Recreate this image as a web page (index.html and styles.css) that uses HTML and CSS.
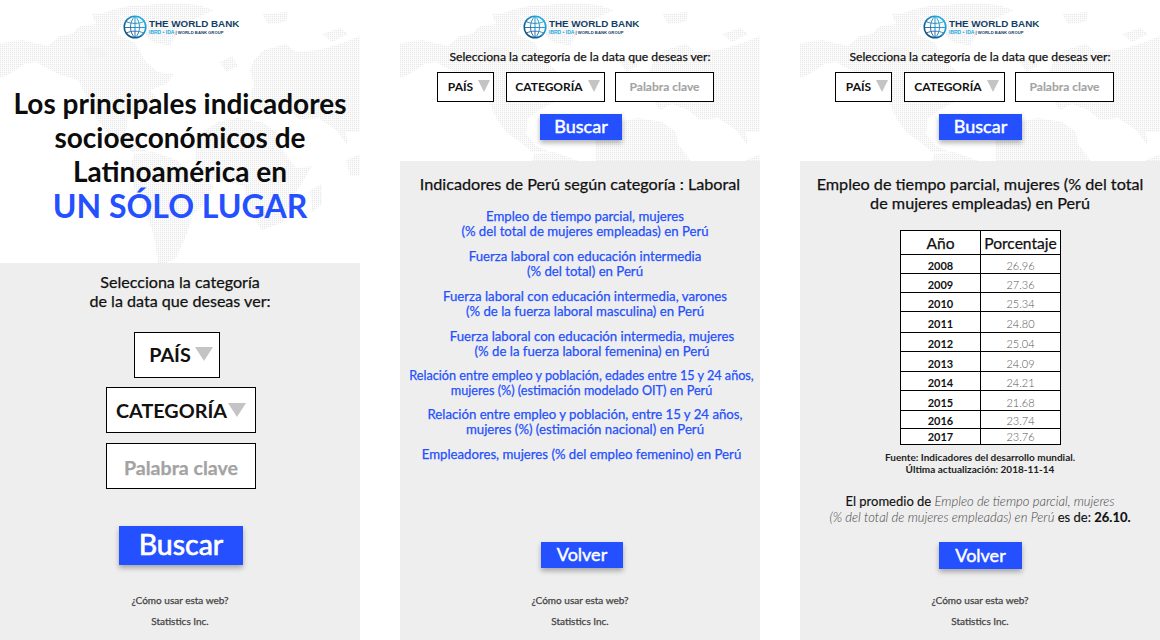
FILE: index.html
```html
<!DOCTYPE html>
<html>
<head>
    <meta charset="UTF-8">
    <meta name="viewport" content="width=device-width, initial-scale=1.0">
    <title>Indicadores socioeconómicos de Latinoamérica</title>
    <link rel="stylesheet" href="styles.css">
</head>
<body>
    <!-- shared drawings: dotted world map and the globe of the logo -->
    <svg class="defs" width="0" height="0">
        <defs>
            <pattern id="dots" width="2" height="2" patternUnits="userSpaceOnUse">
                <rect width="1.3" height="1.3" fill="#e9e9e9"/>
            </pattern>
            <linearGradient id="globe" x1="0" y1="1" x2="1" y2="0">
                <stop offset="0" stop-color="#123f6b"/>
                <stop offset="0.45" stop-color="#1a78b4"/>
                <stop offset="1" stop-color="#1fc0f0"/>
            </linearGradient>
            <symbol id="worldmap" viewBox="0 0 360 263">
                <g fill="url(#dots)">
                    <path d="M0 43L22 40L48 46L60 36L72 34L80 26L96 24L92 14L112 12L126 20L116 34L134 42L146 62L158 72L174 74L166 84L150 90L158 100L146 106L128 118L126 134L136 146L150 152L132 152L120 142L106 132L96 118L88 100L78 80L58 74L36 62L24 64L10 74L0 78Z"/>
                    <path d="M104 12L128 6L176 3L198 5L214 10L196 18L178 30L170 46L152 42L138 26L122 16Z"/>
                    <path d="M82 48L98 46L108 56L92 60Z"/>
                    <path d="M262 14L288 12L286 22L268 24Z"/>
                    <path d="M134 154L154 152L176 160L196 176L214 186L204 204L192 216L186 236L176 258L166 263L158 263L154 236L146 212L134 188L130 168Z"/>
                    <path d="M196 136L218 122L238 118L262 122L276 132L278 144L296 168L312 166L300 186L290 202L284 222L262 230L252 216L244 186L226 182L208 178L196 162Z"/>
                    <path d="M310 190L322 184L322 204L312 212Z"/>
                    <path d="M254 60L264 50L286 44L296 52L318 50L340 44L360 36L360 132L346 132L348 146L336 130L318 118L300 120L288 110L272 104L260 110L250 96L254 84L250 70Z"/>
                    <path d="M322 34L340 28L348 34L332 42Z"/>
                    <path d="M220 62L232 56L238 66L226 72Z"/>
                    <path d="M346 160L360 154L360 176L350 176Z"/>
                </g>
            </symbol>
            <symbol id="globeicon" viewBox="0 0 24 24">
                <g fill="none" stroke="url(#globe)">
                    <circle cx="12" cy="12" r="10.8" stroke-width="1.5"/>
                    <path stroke-width="0.9" d="M12 1.5V22.5M3 6.5C8 9 16 9 21 6.5M1.5 12.5H22.5M3.5 18C8 15.6 16 15.6 20.5 18M12 1.5C6 6 6 18 12 22.5M12 1.5C18 6 18 18 12 22.5"/>
                </g>
            </symbol>
        </defs>
    </svg>

    <main class="screens">
        <!-- pantalla de inicio -->
        <section class="screen">
            <svg class="map"><use href="#worldmap"/></svg>
            <header class="top top-home">
                <div class="logo">
                    <svg class="logo-globe"><use href="#globeicon"/></svg>
                    <div>
                        <div class="logo-name">THE WORLD BANK</div>
                        <div class="logo-sub"><span class="logo-ibrd">IBRD • IDA</span> | WORLD BANK GROUP</div>
                    </div>
                </div>
                <h1 class="hero">Los principales indicadores socioeconómicos de Latinoamérica en <span class="hero-blue">UN SÓLO LUGAR</span></h1>
            </header>
            <div class="panel panel-home">
                <p class="home-lead">Selecciona la categoría<br>de la data que deseas ver:</p>
                <div class="box box-lg box-pais">PAÍS<span class="arrow arrow-lg arrow-pais"></span></div>
                <div class="box box-lg box-cat">CATEGORÍA<span class="arrow arrow-lg"></span></div>
                <div class="box box-lg box-key">Palabra clave</div>
                <button class="btn btn-lg">Buscar</button>
                <footer class="foot">
                    <p>¿Cómo usar esta web?</p>
                    <p>Statistics Inc.</p>
                </footer>
            </div>
        </section>

        <!-- lista de indicadores -->
        <section class="screen">
            <svg class="map"><use href="#worldmap"/></svg>
            <header class="top">
                <div class="logo">
                    <svg class="logo-globe"><use href="#globeicon"/></svg>
                    <div>
                        <div class="logo-name">THE WORLD BANK</div>
                        <div class="logo-sub"><span class="logo-ibrd">IBRD • IDA</span> | WORLD BANK GROUP</div>
                    </div>
                </div>
                <p class="lead">Selecciona la categoría de la data que deseas ver:</p>
                <div class="filters">
                    <div class="box box-sm box-pais-sm">PAÍS<span class="arrow"></span></div>
                    <div class="box box-sm box-cat-sm">CATEGORÍA<span class="arrow"></span></div>
                    <div class="box box-sm box-key box-key-sm">Palabra clave</div>
                </div>
                <button class="btn btn-search">Buscar</button>
            </header>
            <div class="panel">
                <h2 class="title">Indicadores de Perú según categoría : Laboral</h2>
                <ul class="links">
                    <li>Empleo de tiempo parcial, mujeres<br>(% del total de mujeres empleadas) en Perú</li>
                    <li>Fuerza laboral con educación intermedia<br>(% del total) en Perú</li>
                    <li>Fuerza laboral con educación intermedia, varones<br>(% de la fuerza laboral masculina) en Perú</li>
                    <li class="link-right">Fuerza laboral con educación intermedia, mujeres<br>(% de la fuerza laboral femenina) en Perú</li>
                    <li class="link-left link-tight link-long">Relación entre empleo y población, edades entre 15 y 24 años,<br>mujeres (%) (estimación modelado OIT) en Perú</li>
                    <li class="link-tight">Relación entre empleo y población, entre 15 y 24 años,<br>mujeres (%) (estimación nacional) en Perú</li>
                    <li class="link-left">Empleadores, mujeres (% del empleo femenino) en Perú</li>
                </ul>
                <button class="btn btn-back btn-back-list">Volver</button>
                <footer class="foot foot-list">
                    <p>¿Cómo usar esta web?</p>
                    <p>Statistics Inc.</p>
                </footer>
            </div>
        </section>

        <!-- detalle del indicador -->
        <section class="screen">
            <svg class="map"><use href="#worldmap"/></svg>
            <header class="top">
                <div class="logo">
                    <svg class="logo-globe"><use href="#globeicon"/></svg>
                    <div>
                        <div class="logo-name">THE WORLD BANK</div>
                        <div class="logo-sub"><span class="logo-ibrd">IBRD • IDA</span> | WORLD BANK GROUP</div>
                    </div>
                </div>
                <p class="lead">Selecciona la categoría de la data que deseas ver:</p>
                <div class="filters filters-wide">
                    <div class="box box-sm box-pais-sm">PAÍS<span class="arrow"></span></div>
                    <div class="box box-sm box-cat-wide">CATEGORÍA<span class="arrow"></span></div>
                    <div class="box box-sm box-key box-key-sm">Palabra clave</div>
                </div>
                <button class="btn btn-search btn-search-wide">Buscar</button>
            </header>
            <div class="panel">
                <h2 class="title">Empleo de tiempo parcial, mujeres (% del total<br>de mujeres empleadas) en Perú</h2>
                <table class="data">
                    <tr class="head"><th>Año</th><th>Porcentaje</th></tr>
                    <tr><td>2008</td><td>26.96</td></tr>
                    <tr><td>2009</td><td>27.36</td></tr>
                    <tr><td>2010</td><td>25.34</td></tr>
                    <tr class="r21"><td>2011</td><td>24.80</td></tr>
                    <tr><td>2012</td><td>25.04</td></tr>
                    <tr class="r20"><td>2013</td><td>24.09</td></tr>
                    <tr><td>2014</td><td>24.21</td></tr>
                    <tr class="r20"><td>2015</td><td>21.68</td></tr>
                    <tr class="r18"><td>2016</td><td>23.74</td></tr>
                    <tr class="r16"><td>2017</td><td>23.76</td></tr>
                </table>
                <p class="source">Fuente: Indicadores del desarrollo mundial.<br>Última actualización: 2018-11-14</p>
                <p class="avg">El promedio de <em>Empleo de tiempo parcial, mujeres<br>(% del total de mujeres empleadas) en Perú</em> es de: <strong>26.10.</strong></p>
                <button class="btn btn-back btn-back-detail">Volver</button>
                <footer class="foot">
                    <p>¿Cómo usar esta web?</p>
                    <p>Statistics Inc.</p>
                </footer>
            </div>
        </section>
    </main>
</body>
</html>
```
FILE: styles.css
```css
/* base */
*{margin:0;padding:0;box-sizing:border-box;}
html,body{width:100%;height:100%;background:#fff;}
body{font-family:"Lato","Noto Sans",sans-serif;color:#111;overflow:hidden;}
.defs{position:absolute;}

/* Lato has no medium cut here, thicken the regular a little */
.lead,.home-lead,.title,.links,.foot,.box-key,.data th{font-weight:400;-webkit-text-stroke:0.25px currentColor;}
.avg{font-weight:400;-webkit-text-stroke:0.15px currentColor;}
.avg em{-webkit-text-stroke:0;}

.screens{display:flex;gap:40px;height:640px;}
.screen{width:360px;height:640px;display:flex;flex-direction:column;position:relative;}
.map{position:absolute;top:0;left:0;width:360px;height:263px;}

/* top part, sits over the map */
.top{height:161px;padding-top:15px;position:relative;display:flex;flex-direction:column;}
.top-home{height:263px;}

.logo{display:flex;align-items:center;gap:2px;height:23px;padding-left:123px;}
.logo-globe{width:24px;height:24px;}
.logo-name{font-family:"Liberation Sans",sans-serif;font-weight:700;font-size:9.8px;line-height:11px;color:#133f66;}
.logo-sub{font-family:"Liberation Sans",sans-serif;font-weight:700;font-size:4.2px;line-height:7px;color:#133f66;white-space:nowrap;}
.logo-ibrd{color:#1fa9e0;font-size:5px;}

.hero{margin-top:48px;font-size:28px;line-height:34px;font-weight:700;text-align:center;padding:0 12px;color:#0c0c0c;}
.hero-blue{display:block;padding-top:1px;color:#2450ff;font-size:32px;}

.lead{margin-top:11px;text-align:center;font-size:12.2px;line-height:16px;}
.filters{display:flex;margin-top:7px;padding-left:37px;}
.filters-wide{padding-left:35px;}

/* select and input boxes */
.box{background:#fff;border:1px solid #000;display:flex;align-items:center;justify-content:center;font-weight:700;}
.box-key{color:#a3a3a3;}
.box-sm{height:30px;font-size:12px;padding:0 0 2px 7px;}
.box-pais-sm{width:57px;margin-right:12px;}
.box-cat-sm{width:99px;margin-right:10px;padding-left:4px;}
.box-cat-wide{width:101px;margin-right:10px;padding-left:4px;}
.box-key-sm{width:99px;padding:0 0 2px;-webkit-text-stroke:0.1px currentColor;}
.arrow{width:0;height:0;margin-left:5px;border-left:6px solid transparent;border-right:6px solid transparent;border-top:12px solid #c4c4c4;}
.box-lg{height:46px;font-size:19.8px;}
.box-pais{width:86px;margin:22px 6px 0 0;padding:0 0 2px 8px;}
.box-cat{width:150px;margin:9px 0 0 2px;}
.box-lg.box-key{width:150px;margin:10px 0 0 2px;padding-top:2px;font-size:19.6px;}
.arrow-lg{margin-left:1px;border-left-width:9px;border-right-width:9px;border-top-width:14px;}
.arrow-pais{margin-left:4px;}

/* buttons */
.btn{display:block;border:0;padding-bottom:2px;background:#2450ff;color:#fff;font-family:inherit;font-weight:400;-webkit-text-stroke:0.45px currentColor;box-shadow:0 3px 5px rgba(0,0,0,0.3);}
.btn-lg{width:124px;height:39px;margin:37px 0 0 2px;padding-bottom:3px;font-size:28.5px;-webkit-text-stroke:0.7px currentColor;}
.btn-search{width:82px;height:26px;margin:12px 0 0 140px;font-size:18px;}
.btn-search-wide{width:83px;margin-left:139px;}
.btn-back{height:26px;width:82px;font-size:18px;}

/* grey panel */
.panel{flex:1;background:#eee;position:relative;display:flex;flex-direction:column;}
.panel-home{align-items:center;padding-top:9px;}
.home-lead{font-size:16.1px;line-height:19px;text-align:center;}

.title{margin-top:13px;font-size:16.2px;line-height:19px;text-align:center;white-space:nowrap;}

.links{list-style:none;margin-top:16px;color:#2450ff;font-size:13.2px;line-height:15px;display:flex;flex-direction:column;gap:10px;}
.links li{text-align:center;padding-left:10px;white-space:nowrap;}
.links .link-right{padding-left:24px;}
.links .link-left{padding-left:3px;}
.links .link-tight{margin-top:-1px;}
.links .link-long{font-size:12.65px;}
.btn-back-list{margin:auto 0 0 141px;}
.btn-back-detail{width:83px;height:27px;margin:17px 0 0 139px;}

/* detail table */
.data{border-collapse:collapse;margin:18px 0 0 100px;width:161px;background:#fff;table-layout:fixed;}
.data th,.data td{border:1px solid #000;text-align:center;padding:0;}
.data th{font-size:15.6px;}
.data th:first-child,.data td:first-child{width:80px;}
.data td{font-size:11px;line-height:11px;height:19px;padding-top:3px;color:#555;font-weight:300;}
.data td:first-child{color:#111;font-weight:700;}
.data .head th{height:24px;}
.data .r21 td{height:21px;}
.data .r20 td{height:20px;}
.data .r18 td{height:18px;padding-top:2px;}
.data .r16 td{height:16px;padding-top:0;}

.source{margin-top:6px;font-size:10px;line-height:12px;font-weight:700;text-align:center;color:#222;}
.avg{margin-top:18px;font-size:13px;line-height:16px;text-align:center;white-space:nowrap;}
.avg em{font-weight:300;color:#444;}
.avg strong{font-weight:700;}

.foot{margin-top:auto;padding-bottom:8px;text-align:center;font-size:10px;line-height:21px;color:#444;}
.foot-list{margin-top:0;padding-top:22px;}
```
